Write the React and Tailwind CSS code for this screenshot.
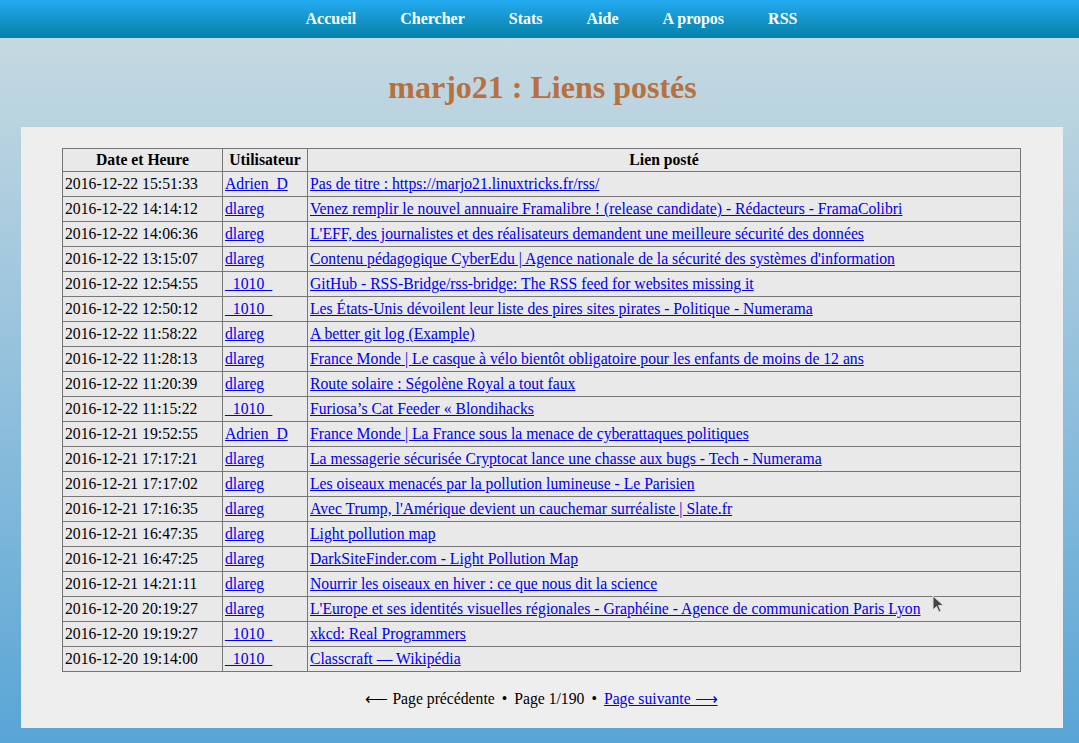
import React from 'react';

const navItems = ['Accueil', 'Chercher', 'Stats', 'Aide', 'A propos', 'RSS'];

const links = [
  ['2016-12-22 15:51:33', 'Adrien_D', 'Pas de titre : https://marjo21.linuxtricks.fr/rss/'],
  ['2016-12-22 14:14:12', 'dlareg', 'Venez remplir le nouvel annuaire Framalibre ! (release candidate) - Rédacteurs - FramaColibri'],
  ['2016-12-22 14:06:36', 'dlareg', "L'EFF, des journalistes et des réalisateurs demandent une meilleure sécurité des données"],
  ['2016-12-22 13:15:07', 'dlareg', "Contenu pédagogique CyberEdu | Agence nationale de la sécurité des systèmes d'information"],
  ['2016-12-22 12:54:55', '_1010_', 'GitHub - RSS-Bridge/rss-bridge: The RSS feed for websites missing it'],
  ['2016-12-22 12:50:12', '_1010_', 'Les États-Unis dévoilent leur liste des pires sites pirates - Politique - Numerama'],
  ['2016-12-22 11:58:22', 'dlareg', 'A better git log (Example)'],
  ['2016-12-22 11:28:13', 'dlareg', 'France Monde | Le casque à vélo bientôt obligatoire pour les enfants de moins de 12 ans'],
  ['2016-12-22 11:20:39', 'dlareg', 'Route solaire : Ségolène Royal a tout faux'],
  ['2016-12-22 11:15:22', '_1010_', 'Furiosa’s Cat Feeder « Blondihacks'],
  ['2016-12-21 19:52:55', 'Adrien_D', 'France Monde | La France sous la menace de cyberattaques politiques'],
  ['2016-12-21 17:17:21', 'dlareg', 'La messagerie sécurisée Cryptocat lance une chasse aux bugs - Tech - Numerama'],
  ['2016-12-21 17:17:02', 'dlareg', 'Les oiseaux menacés par la pollution lumineuse - Le Parisien'],
  ['2016-12-21 17:16:35', 'dlareg', "Avec Trump, l'Amérique devient un cauchemar surréaliste | Slate.fr"],
  ['2016-12-21 16:47:35', 'dlareg', 'Light pollution map'],
  ['2016-12-21 16:47:25', 'dlareg', 'DarkSiteFinder.com - Light Pollution Map'],
  ['2016-12-21 14:21:11', 'dlareg', 'Nourrir les oiseaux en hiver : ce que nous dit la science'],
  ['2016-12-20 20:19:27', 'dlareg', "L'Europe et ses identités visuelles régionales - Graphéine - Agence de communication Paris Lyon"],
  ['2016-12-20 19:19:27', '_1010_', 'xkcd: Real Programmers'],
  ['2016-12-20 19:14:00', '_1010_', 'Classcraft — Wikipédia'],
];

const App = () => {
  return (
    <div
      className="relative min-h-[743px] bg-gradient-to-b from-[#cbdce1] to-[#58a5d6] text-black"
      style={{ fontFamily: '"Liberation Serif", "Times New Roman", serif' }}
    >
      {/* Top navigation */}
      <nav className="h-[38px] bg-gradient-to-b from-[#23aaf1] to-[#0481a6] flex items-center justify-center gap-[44px] pl-[24px]">
        {navItems.map((item) => (
          <a key={item} href="#" className="text-white font-bold text-[16px] leading-none">
            {item}
          </a>
        ))}
      </nav>

      {/* Title */}
      <h1 className="text-center font-bold text-[32px] leading-none text-[#b8703f] pt-[33px] pb-[24px] pl-[6px]">
        marjo21 : Liens postés
      </h1>

      {/* Panel */}
      <div className="ml-[21px] mr-[16px] bg-[#eeeeee] pt-[21px] pl-[41px] pb-[20px]">
        <table className="w-[959px] border-collapse bg-[#e9e9e9] text-[15.7px] leading-[18px]">
          <thead>
            <tr className="h-[23px]">
              <th className="border border-[#777] w-[160px] font-bold">Date et Heure</th>
              <th className="border border-[#777] w-[85px] font-bold">Utilisateur</th>
              <th className="border border-[#777] font-bold">Lien posté</th>
            </tr>
          </thead>
          <tbody>
            {links.map(([date, user, title], i) => (
              <tr key={i} className="h-[25px]">
                <td className="border border-[#777] px-[2px] whitespace-nowrap">{date}</td>
                <td className="border border-[#777] px-[2px]">
                  <a href="#" className="text-[#0000ee] underline">{user}</a>
                </td>
                <td className="border border-[#777] px-[2px] whitespace-nowrap">
                  <a href="#" className="text-[#0000ee] underline">{title}</a>
                </td>
              </tr>
            ))}
          </tbody>
        </table>

        {/* Pagination */}
        <div className="w-[959px] text-center text-[15.7px] leading-[18px] mt-[18px]">
          <span>⟵ Page précédente</span>
          <span className="mx-[7px]">•</span>
          <span>Page 1/190</span>
          <span className="mx-[7px]">•</span>
          <a href="#" className="text-[#0000ee] underline">Page suivante ⟶</a>
        </div>
      </div>

      {/* Mouse pointer */}
      <svg className="absolute left-[932px] top-[595px]" width="14" height="20" viewBox="0 0 14 20">
        <path d="M1 1 L1 15 L4.5 11.5 L7 17 L9 16 L6.5 10.5 L11.5 10.5 Z" fill="#444" stroke="#ddd" strokeWidth="1" />
      </svg>
    </div>
  );
};

export default App;
